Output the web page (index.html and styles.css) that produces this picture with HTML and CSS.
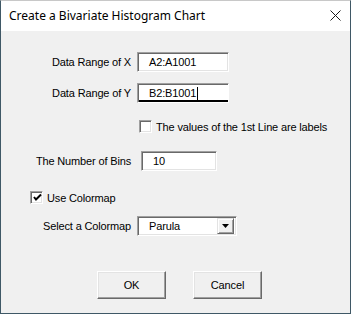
FILE: index.html
```html
<!DOCTYPE html>
<html>
<head>
<meta charset="utf-8">
<link rel="stylesheet" href="styles.css">
</head>
<body>
<div class="window">
  <div class="titlebar">
    <span class="title">Create a Bivariate Histogram Chart</span>
    <svg class="close" width="11" height="11" viewBox="0 0 11 11"><path d="M0.5 0.5 L10.5 10.5 M10.5 0.5 L0.5 10.5" stroke="#1a1a1a" stroke-width="1" fill="none"/></svg>
  </div>
  <div class="body">
    <div class="row row-x">
      <span class="label">Data Range of X</span>
      <div class="field field-range"><span class="val">A2:A1001</span></div>
    </div>
    <div class="row row-y">
      <span class="label">Data Range of Y</span>
      <div class="field field-range focused"><span class="val">B2:B1001</span><span class="caret"></span></div>
    </div>
    <div class="row row-check">
      <span class="checkbox"></span>
      <span class="check-text">The values of the 1st Line are labels</span>
    </div>
    <div class="row row-bins">
      <span class="label">The Number of Bins</span>
      <div class="field field-bins"><span class="val">10</span></div>
    </div>
    <div class="row row-use">
      <span class="checkbox checked">
        <svg width="9" height="9" viewBox="0 0 9 9"><path d="M1 4 L3 6.5 L8 1.5" stroke="#000" stroke-width="2" fill="none"/></svg>
      </span>
      <span class="check-text">Use Colormap</span>
    </div>
    <div class="row row-select">
      <span class="label">Select a Colormap</span>
      <div class="field field-select">
        <span class="val">Parula</span>
        <span class="drop"><svg width="7" height="4" viewBox="0 0 7 4"><path d="M0 0 H7 L3.5 4 Z" fill="#000"/></svg></span>
      </div>
    </div>
    <div class="buttons">
      <button class="btn">OK</button>
      <button class="btn">Cancel</button>
    </div>
  </div>
</div>
</body>
</html>
```
FILE: styles.css
```css
html, body {
  margin: 0;
  padding: 0;
}
body {
  font-family: "Liberation Sans", Arial, sans-serif;
  font-size: 11px;
  letter-spacing: -0.15px;
  color: #000;
  background: #f0f0f0;
}
.window {
  width: 351px;
  height: 314px;
  box-sizing: border-box;
  border: 1px solid #3f5866;
  border-top-color: #c8c8c8;
  background: #f0f0f0;
  display: flex;
  flex-direction: column;
}
.titlebar {
  height: 30px;
  background: #fff;
  display: flex;
  align-items: center;
  justify-content: space-between;
  padding: 0 9px 0 8px;
  flex: none;
}
.title {
  font-family: "Noto Sans", sans-serif;
  font-size: 12px;
  letter-spacing: 0;
  color: #000;
  margin-top: -1px;
}
.close {
  display: block;
  margin-top: -1px;
}
.body {
  flex: 1;
  display: flex;
  flex-direction: column;
}
.row {
  display: flex;
  align-items: center;
}
.label {
  width: 130px;
  text-align: right;
  flex: none;
}
.field {
  box-sizing: border-box;
  height: 20px;
  background: #fff;
  border-top: 1px solid #a0a0a0;
  border-left: 1px solid #a0a0a0;
  border-right: 1px solid #fff;
  border-bottom: 1px solid #fff;
  box-shadow: inset 1px 1px 0 #696969, inset -1px -1px 0 #e3e3e3;
  display: flex;
  align-items: center;
}
.field .val {
  padding-left: 11px;
}
.row-x { margin-top: 21px; height: 20px; }
.row-y { margin-top: 11px; height: 20px; }
.field-range {
  margin-left: 6px;
  width: 92px;
}
.focused {
  box-shadow: inset 1px 1px 0 #696969, inset 0 -2px 0 #000;
}
.caret {
  width: 1px;
  height: 13px;
  background: #000;
  margin-left: 1px;
}
.row-check {
  margin-top: 17px;
  height: 13px;
  padding-left: 138px;
}
.checkbox {
  box-sizing: border-box;
  width: 13px;
  height: 13px;
  background: #fff;
  border-top: 1px solid #a0a0a0;
  border-left: 1px solid #a0a0a0;
  border-right: 1px solid #fff;
  border-bottom: 1px solid #fff;
  box-shadow: inset 1px 1px 0 #696969, inset -1px -1px 0 #e3e3e3;
  display: flex;
  align-items: center;
  justify-content: center;
  flex: none;
}
.checkbox svg { display: block; margin-left: 1px; }
.check-text {
  margin-left: 4px;
}
.row-bins { margin-top: 18px; height: 20px; }
.field-bins {
  margin-left: 10px;
  width: 76px;
}
.row-use {
  margin-top: 20px;
  height: 13px;
  padding-left: 29px;
}
.row-select { margin-top: 12px; height: 20px; }
.field-select {
  margin-left: 6px;
  width: 100px;
  justify-content: space-between;
}
.drop {
  box-sizing: border-box;
  width: 17px;
  height: 16px;
  margin-right: 2px;
  background: #f0f0f0;
  border-top: 1px solid #e3e3e3;
  border-left: 1px solid #e3e3e3;
  border-right: 1px solid #696969;
  border-bottom: 1px solid #696969;
  box-shadow: inset 1px 1px 0 #fff, inset -1px -1px 0 #a0a0a0;
  display: flex;
  align-items: center;
  justify-content: center;
}
.drop svg { display: block; }
.buttons {
  margin-top: 35px;
  display: flex;
  padding-left: 96px;
  gap: 27px;
}
.btn {
  box-sizing: border-box;
  width: 69px;
  height: 28px;
  font-family: "Liberation Sans", Arial, sans-serif;
  font-size: 11px;
  letter-spacing: -0.15px;
  color: #000;
  background: #f0f0f0;
  border-top: 1px solid #fff;
  border-left: 1px solid #fff;
  border-right: 1px solid #696969;
  border-bottom: 1px solid #696969;
  box-shadow: inset -1px -1px 0 #a0a0a0, inset 1px 1px 0 #e3e3e3;
  padding: 0;
}
```
